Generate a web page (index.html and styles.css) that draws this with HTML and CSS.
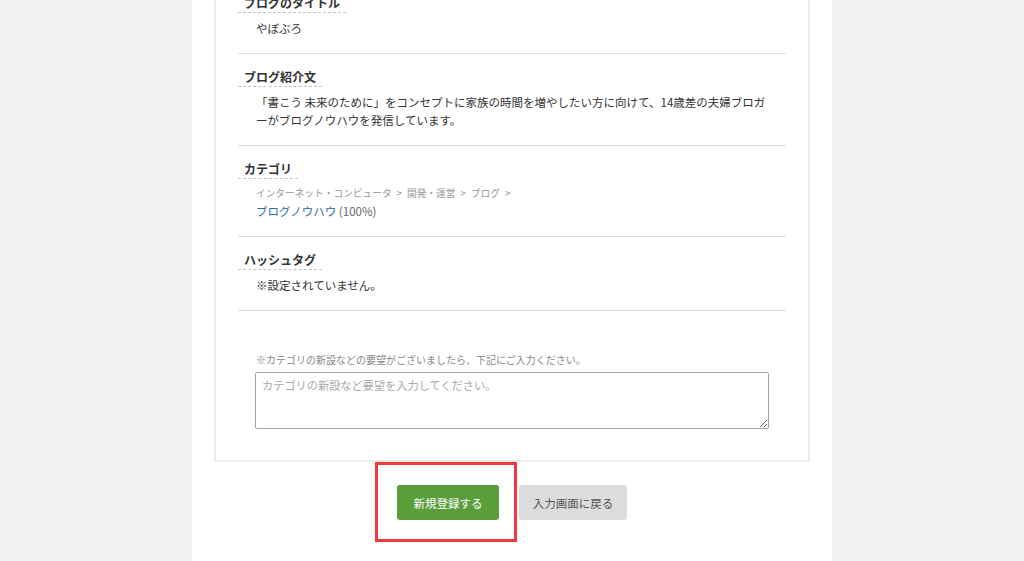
FILE: index.html
```html
<!DOCTYPE html>
<html lang="ja">

<head>
	<meta charset="UTF-8">
	<meta name="viewport" content="width=device-width, initial-scale=1.0">
	<title>ブログ登録内容の確認</title>
	<link rel="stylesheet" href="styles.css">
</head>

<body>
	<main class="column">
		<div class="card">
			<section class="item">
				<h2 class="item-title">ブログのタイトル</h2>
				<p class="item-body">やぼぶろ</p>
			</section>

			<section class="item">
				<h2 class="item-title">ブログ紹介文</h2>
				<p class="item-body item-desc">「書こう 未来のために」をコンセプトに家族の時間を増やしたい方に向けて、14歳差の夫婦ブロガーがブログノウハウを発信しています。</p>
			</section>

			<section class="item">
				<h2 class="item-title">カテゴリ</h2>
				<div class="item-body">
					<p class="crumbs">インターネット・コンピュータ<span class="sep">&gt;</span>開発・運営<span class="sep">&gt;</span>ブログ<span class="sep">&gt;</span></p>
					<p class="category"><a href="#">ブログノウハウ</a> <span class="rate">(100%)</span></p>
				</div>
			</section>

			<section class="item">
				<h2 class="item-title">ハッシュタグ</h2>
				<p class="item-body">※設定されていません。</p>
			</section>

			<div class="request">
				<p class="request-note">※カテゴリの新設などの要望がございましたら、下記にご入力ください。</p>
				<textarea class="request-input" placeholder="カテゴリの新設など要望を入力してください。"></textarea>
			</div>
		</div>

		<div class="actions">
			<span class="marked">
				<button class="btn btn-primary">新規登録する</button>
			</span>
			<button class="btn btn-back">入力画面に戻る</button>
		</div>
	</main>
</body>

</html>
```

FILE: styles.css
```css
* {
	margin: 0;
	padding: 0;
	box-sizing: border-box;
}

body {
	background-color: #f2f2f2;
	color: #333;
	font-family: "Noto Sans CJK JP", "Noto Sans", sans-serif;
	font-size: 12px;
	line-height: 18px;
}

.column {
	display: flow-root;
	width: 640px;
	min-height: 100vh;
	margin: 0 auto;
	padding: 0 22px;
	background: #fff;
}

.card {
	margin-top: -22px;
	padding: 0 22px 31px;
	border: 2px solid #ececec;
}

.item {
	padding: 14px 0 16px;
	border-bottom: 1px solid #dcdcdc;
}

.item-title {
	width: fit-content;
	padding: 0 6px;
	font-size: 12px;
	line-height: 18px;
	font-weight: bold;
	color: #333;
	border-bottom: 1px dashed #c4c4c4;
}

.item-body {
	margin-top: 6px;
	padding: 0 14px 0 18px;
	font-size: 11.5px;
	line-height: 18px;
}

.crumbs {
	font-size: 9.7px;
	line-height: 17px;
	color: #999;
}

.sep {
	margin: 0 5px;
}

.category {
	font-size: 11.5px;
	line-height: 18px;
}

.category a {
	color: #2b6cb0;
	text-decoration: none;
}

.rate {
	color: #666;
}

.request {
	padding: 41px 17px 0;
}

.request-note {
	font-size: 10px;
	line-height: 16px;
	color: #888;
	padding-left: 1px;
	margin-bottom: 4px;
}

.request-input {
	display: block;
	width: 100%;
	height: 57px;
	padding: 4px 6px;
	font-family: inherit;
	font-size: 11.2px;
	color: #333;
	border: 1px solid #a6a6a6;
	border-radius: 2px;
}

.request-input::placeholder {
	color: #aaa;
}

.actions {
	display: flex;
	justify-content: center;
	gap: 20px;
	padding-top: 23px;
}

.marked {
	position: relative;
	display: flex;
}

.marked::after {
	content: "";
	position: absolute;
	top: -23px;
	bottom: -22px;
	left: -22px;
	right: -18px;
	border: 3px solid #f23a3a;
	pointer-events: none;
}

.btn {
	height: 35px;
	border: none;
	border-radius: 3px;
	font-family: inherit;
	font-size: 11.5px;
	cursor: pointer;
}

.btn-primary {
	width: 102px;
	color: #fff;
	background-color: #5a9e3b;
}

.btn-back {
	width: 108px;
	color: #555;
	background-color: #dcdcdc;
}
```
